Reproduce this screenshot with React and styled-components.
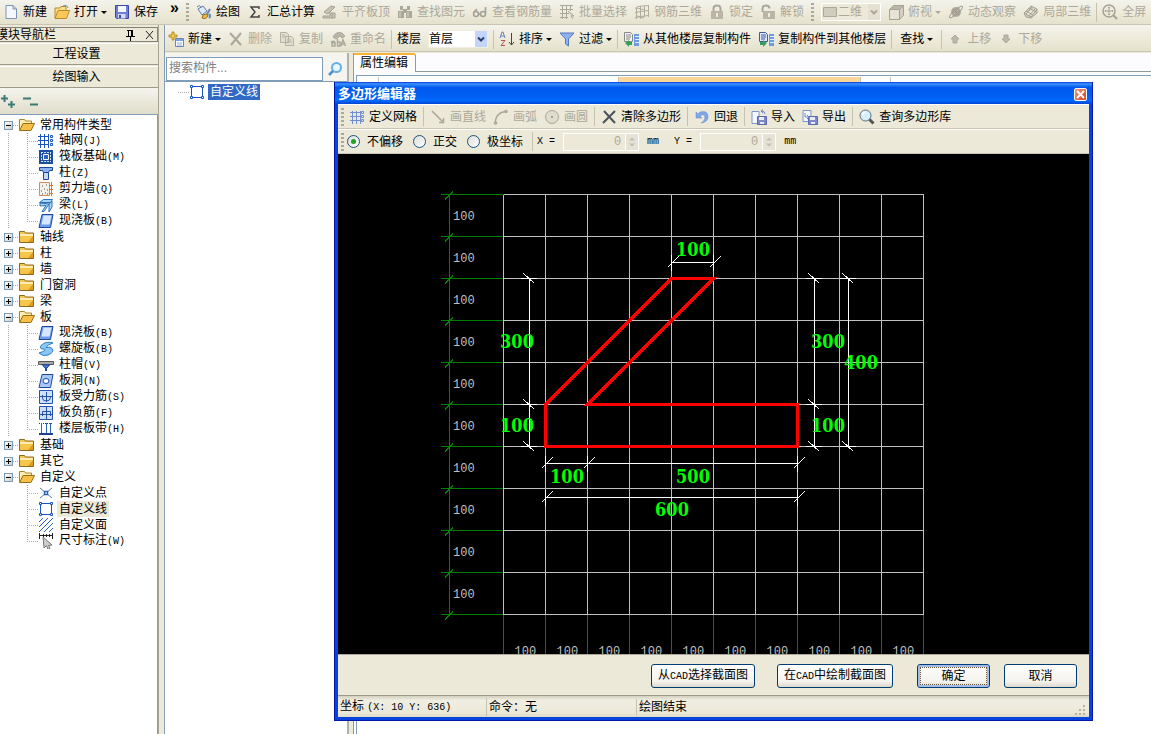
import React from 'react';
import styled, { createGlobalStyle, css } from 'styled-components';

const GlobalStyle = createGlobalStyle`
    * {
        box-sizing: border-box;
    }

    body {
        margin: 0;
        overflow: hidden;
        background: #ece9d8;
        color: #000;
        font: 12px/16px 'Liberation Sans', 'Noto Sans CJK SC', sans-serif;
    }

    button,
    input,
    select {
        font: inherit;
        color: inherit;
    }

    ul {
        list-style: none;
        margin: 0;
        padding: 0;
    }
`;

const icons = {
    page: (
        <path d="M3 1.500h7l3.500 3.500v9.500h-10.500z M10 1.500v3.500h3.500" fill="#f4f8fd" stroke="#7b93b5" />
    ),
    open: (
        <g>
            <path d="M1 14V4h5l1-1.500h5V6" fill="#fbe08c" stroke="#b58a2c" />
            <path d="M1 14.500 4 6.500h11.500l-3 8z" fill="#fcc85a" stroke="#b58a2c" />
            <path d="M9 2q4-2 5 2" fill="none" stroke="#6b93cf" />
        </g>
    ),
    save: (
        <g>
            <path d="M1.500 1.500h13v13h-12l-1-1z" fill="#6f7fd6" stroke="#3b489f" />
            <path d="M4 2h8v6H4z" fill="#f3f6fd" />
            <path d="M4 10h7.500v4.500H4z" fill="#d5daf0" />
            <path d="M5 11h2v3H5z" fill="#3b489f" />
        </g>
    ),
    paint: (
        <g>
            <path d="m2 5 5-3 4 5-5 4z" fill="#dfe9f8" stroke="#5d7ba9" />
            <path d="M1 3q3-3 4 1" fill="none" stroke="#5d7ba9" />
            <path d="m14 5-4 7" stroke="#6a85b5" strokeWidth="2" />
            <path d="M10 10q-4 0-4 4 5 2 6-3z" fill="#efb53f" stroke="#9d7420" />
            <path d="M13 10q2 2 0 4" fill="none" stroke="#4f86d6" strokeWidth="2" />
        </g>
    ),
    sum: <path d="M12 5V3H4l4 5-4 5h8v-2" fill="none" stroke="#444" strokeWidth="1.500" />,
    slab: (
        <g fill="#c6c3b4" stroke="#a5a294">
            <path d="m2 8 7-6 4 1-7 7z" />
            <path d="M1 12h7V9h5v5H1zM10 9v5" />
        </g>
    ),
    find: (
        <g fill="#aaa89b">
            <path d="M3 2h3v4H3zM10 2h3v4h-3zM1 7h6v7H1zM9 7h6v7H9zM6 5h4v4H6z" />
            <path d="M3 8v5M11 8v5" stroke="#dedbcc" />
        </g>
    ),
    glasses: (
        <g fill="none" stroke="#a3a195" strokeWidth="1.500">
            <circle cx="4" cy="10" r="2.500" />
            <circle cx="11" cy="10" r="2.500" />
            <path d="M6.500 10h2M2 8l3-3M13.500 10V3" />
        </g>
    ),
    batch: (
        <g fill="none" stroke="#aaa89b">
            <path d="M1 1.500h13M1 5.500h13M1 9.500h9M1 13.500h8M3.500 1v14M7.500 1v14M11.500 1v6" />
            <path d="m9 7 6 5h-3l2 3" fill="#d5d2c3" />
        </g>
    ),
    rebar: (
        <path
            d="M1 4.500 4 2.500 14 1.500M1 8.500 14 6.500M1 13.500 14 11.500M2.500 3v12M6.500 2v13M10.500 2v11M14.500 1v12M3 12l7 2M3 4l8 2"
            fill="none"
            stroke="#b0ad9f"
        />
    ),
    lock: (
        <g>
            <path d="M4.500 8V4.500q0-3 3.500-3t3.500 3V8" fill="none" stroke="#aaa89b" strokeWidth="2" />
            <path d="M2 7h12v8H2z" fill="#b9b6a8" />
            <path d="M7 9h2v4H7z" fill="#eeebdc" />
        </g>
    ),
    unlock: (
        <g>
            <path d="M2.500 8V4.500q0-3 3.500-3t3.500 3" fill="none" stroke="#aaa89b" strokeWidth="2" />
            <path d="M3 7h12v8H3z" fill="#b9b6a8" />
            <path d="M8 9h2v4H8z" fill="#eeebdc" />
        </g>
    ),
    plane: <path d="M1.500 3.500h13v9h-13z" fill="#d0cdbe" stroke="#aaa89b" />,
    cube: (
        <g stroke="#a5a294">
            <path d="M1.500 5.500l4-4h10l-4 4z" fill="#bbb8aa" />
            <path d="M1.500 5.500h10v10h-10z" fill="#e6e3d5" />
            <path d="M11.500 5.500l4-4v10l-4 4z" fill="#d2cfc1" />
        </g>
    ),
    orbit: (
        <g>
            <circle cx="8" cy="8" r="5" fill="#aeab9e" />
            <path d="M2 14q-2-2 4-7t8-5q2 2-4 7t-8 5M5 5l6 6" fill="none" stroke="#98968b" />
        </g>
    ),
    local3d: (
        <path d="m1 9 7-7 6 3-6 8zM3 10l6-7M6 12l6-7M3 7l7 4M6 4l7 4M1 9l2 4 5 1 6-5V5" fill="#d5d2c4" stroke="#a3a094" />
    ),
    zoomAll: (
        <g fill="none" stroke="#a5a294">
            <circle cx="7" cy="7" r="6" strokeWidth="1.500" />
            <path d="M7 3v8M3 7h8M6 4l1-1 1 1M6 10l1 1 1-1M4 6 3 7l1 1M10 6l1 1-1 1" />
            <path d="m11 11 4 4" strokeWidth="2" />
        </g>
    ),
    newItem: (
        <g>
            <path d="M4 1h2v3h3v2H6v3H4V6H1V4h3z" fill="#f5d04c" stroke="#b08e2a" />
            <path d="M7.500 7.500h8v8h-8z" fill="#f6faff" stroke="#6a86b8" />
            <path d="M8 8h7v2H8z" fill="#7da4e2" />
            <path d="M9 12h5M9 14h5" stroke="#9bb5de" />
        </g>
    ),
    crossOff: <path d="m2 2 11 12M13 2 3 14" stroke="#aaa79a" strokeWidth="2" />,
    cross: <path d="m3 2 11 12M14 2 2 14" stroke="#4c525d" strokeWidth="2" />,
    copy: (
        <path
            d="M1.500 1.500h6l2 2v8h-8zM6.500 5.500h6l2 2v7h-8zM8 9h4M8 11h5M3 4h3M3 6h3"
            fill="#e2dfd0"
            stroke="#b4b1a3"
        />
    ),
    rename: (
        <g fill="none" stroke="#aaa89b">
            <path d="M3 6q3-6 9-4l3 3-3 2-2-2-4 3z" fill="#b9b6a8" />
            <path d="M1 11q4-2 4 1v3H2v-3h3M7.500 8v7h2.500v-4H7.500M11 15l2-6 2.500 6M12 13h3" strokeWidth="1.500" />
        </g>
    ),
    sort: (
        <g fill="none">
            <path d="m1 7 2-6h1l2 6M2 5h3" stroke="#6a80bd" />
            <path d="M2 9.500h4l-4 5h4" stroke="#b0585c" />
            <path d="M12.500 2v12M10 11l2.500 3 2.500-3" stroke="#444" />
        </g>
    ),
    filter: <path d="M1 2h14L9.500 8v7l-3-2V8z" fill="#8fb2f0" stroke="#5078c0" />,
    copyFrom: (
        <g>
            <path d="M1.500 1.500h6l2 2v7h-8z" fill="#f1f1f1" stroke="#888" />
            <path d="M3 4h5M3 6h5M3 8h4" stroke="#888" />
            <path d="M11 3h5v12h-5z" fill="#6b9be0" />
            <path d="M12 5.500h4M12 8.500h4M12 11.500h4" stroke="#e3eefc" />
            <path d="m2 12 4-3v2h3v3H6v2z" fill="#36a058" />
        </g>
    ),
    copyTo: (
        <g>
            <path d="M1.500 1.500h6l2 2v7h-8z" fill="#dfe8fa" stroke="#3a59a8" />
            <path d="M3 4h5M3 6h5M3 8h4" stroke="#3a59a8" />
            <path d="M11 3h5v12h-5z" fill="#6b9be0" />
            <path d="M12 5.500h4M12 8.500h4M12 11.500h4" stroke="#e3eefc" />
            <path d="m9 12-4-3v2H2v3h3v2z" fill="#36a058" />
        </g>
    ),
    up: <path d="m8 4 4 4h-2v4H6V8H4z" fill="#bcb9ac" stroke="#aaa89b" />,
    down: <path d="M8 12 4 8h2V4h4v4h2z" fill="#bcb9ac" stroke="#aaa89b" />,
    grid: (
        <g fill="none" stroke="#6f8fce">
            <path d="M1 3.500h10M1 7.500h10M1 11.500h10M3.500 2v13M7.500 2v13M11.500 2v13" />
            <path d="M12.500 2.500h2v2h-2zM12.500 6.500h2v2h-2zM12.500 10.500h2v2h-2z" />
        </g>
    ),
    line: <path d="m2 2 11 11M13.500 9v4.500H9" fill="none" stroke="#aaa799" strokeWidth="1.500" />,
    arc: (
        <g fill="none" stroke="#aaa799" strokeWidth="1.500">
            <path d="M2 14Q3 4 12 2.500" />
            <circle cx="13" cy="2.500" r="1" />
            <circle cx="2.500" cy="14" r="1" />
        </g>
    ),
    circle: (
        <g>
            <circle cx="8" cy="8" r="6.500" fill="#e0ddce" stroke="#aaa799" />
            <path d="M7 7h2v2H7z" fill="#a19e91" />
        </g>
    ),
    undo: <path d="M2 3v6h6L6 7q4-3 5 1 0 4-4 6 7-1 7-6 0-7-8-5L4 5z" fill="#7fa6ea" stroke="#5f86c9" strokeWidth=".5" />,
    importFile: (
        <g>
            <path d="M1 2.500h7v12H1z" fill="#f4f8ff" stroke="#7f95c8" />
            <path d="M6.500 7.500h9v8h-9z" fill="#7d88cf" stroke="#5a66b0" />
            <path d="M8 8h5v3H8zM9 13h4v2H9z" fill="#e8edfb" />
            <path d="M14 5q0-3-4-3M12 .5 10 2l2 2" fill="none" stroke="#6b86c0" />
        </g>
    ),
    exportFile: (
        <g>
            <path d="M1 1.500h8v11H1z" fill="#f4f8ff" stroke="#7f95c8" />
            <path d="M6.500 7.500h9v8h-9z" fill="#7d88cf" stroke="#5a66b0" />
            <path d="M8 8h5v3H8zM9 13h4v2H9z" fill="#e8edfb" />
            <path d="M3 4v4h4M5 6l2 2-2 2" fill="none" stroke="#6b86c0" />
        </g>
    ),
    magnifier: (
        <g>
            <path d="m10 10 4.500 4.500" stroke="#555" strokeWidth="3" />
            <circle cx="6.500" cy="6.500" r="5.500" fill="#d7effa" stroke="#5b6c7a" />
            <path d="M3.500 6q.5-2.500 3-3" fill="none" stroke="#fff" strokeWidth="1.500" />
        </g>
    ),
    search: (
        <g fill="none">
            <circle cx="9.500" cy="6.500" r="4.500" fill="#e9f6fd" stroke="#65b3e6" strokeWidth="2" />
            <path d="m6 10-4 4" stroke="#4e8fd0" strokeWidth="2.500" />
        </g>
    ),
    folder: (
        <g>
            <path d="M.5 13.500v-11h5l1 1.500h8v9.500z" fill="#f4c64c" stroke="#8a6a1c" />
            <path d="M1 5h13v2H1z" fill="#fdeeb0" />
            <path d="M9 13 14 7v6z" fill="#dd9c1f" />
        </g>
    ),
    folderOpen: (
        <g>
            <path d="M.5 13V2.500h5l1 1.500h6V7" fill="#fdeeb0" stroke="#a8842c" />
            <path d="M.5 13.500 4 6.500h11.500l-3.500 7z" fill="#f7bf45" stroke="#94701c" />
        </g>
    ),
    axis: (
        <g fill="none" stroke="#1b56bd">
            <path d="M0 3.500h11M0 7.500h11M0 11.500h11M2.500 1v14M6.500 1v14M10.500 1v14" />
            <path d="M12.500 2.500h2v2h-2zM12.500 6.500h2v2h-2zM12.500 10.500h2v2h-2z" />
        </g>
    ),
    raft: (
        <g fill="none">
            <path d="M1 1h14v14H1z" fill="#1c4f9f" />
            <path d="M3 3.500h10M3 12.500h10M3.500 3v10M12.500 3v10" stroke="#cfe2fa" strokeDasharray="2 1" />
            <path d="M5.500 5.500h5v5h-5z" fill="#2c66ba" stroke="#fff" />
        </g>
    ),
    column: (
        <g stroke="#1d4693" fill="#8ab3f0">
            <path d="M1.500 2.500h13v3h-3l-1 2h-5l-1-2h-3z" />
            <path d="M5.500 7.500h5v7h-5z" fill="#c5dafa" />
        </g>
    ),
    shear: (
        <g>
            <path d="M1.500 1.500h10v13h-10z" fill="#f4f1ea" stroke="#d08b58" />
            <path d="M4 5h1M8 4h1M6 8h1M3 10h1M9 9h1M7 12h1M4 13h1M9 13h1" stroke="#555" />
            <path d="M13.500 1v14M11 4.500h4M11 8.500h4M11 12.500h4" stroke="#d9772c" />
        </g>
    ),
    beam: (
        <g stroke="#2c72b8" fill="#a8d4f6">
            <path d="m1.500 5.500 4-3h9l-2 3z" />
            <path d="m2 6 9 1-5 7.500H4l4-6-6 .5zM11 7l3-3v6l-3 5z" />
        </g>
    ),
    slabBlue: (
        <g>
            <path d="M4 1.500h11L12.500 14.500H1z" fill="#6d9cec" stroke="#1b47a0" />
            <path d="M5.500 2.500h8l-2 9h-8z" fill="#d6e6fd" />
        </g>
    ),
    spiral: (
        <path
            d="M15 2Q8-.5 3 4.500q-2 4 3 3.500 4 1-5 4 4 4 9 2 7-3 4-6.500-2-2-6-1 1-3 7-4.500z"
            fill="#8cc6f3"
            stroke="#2a7fc4"
        />
    ),
    cap: (
        <g>
            <path d="M.5 4.500h15v3H.5z" fill="#aaa" stroke="#555" />
            <path d="M4.500 8h7L9 11H7z" fill="#4a86e0" stroke="#1b47a0" />
            <path d="M7 11h2v3H7z" fill="#1b47a0" />
        </g>
    ),
    hole: (
        <g>
            <path d="M4 1.500h11L12.500 14.500H1z" fill="#a9c8f8" stroke="#1b47a0" />
            <ellipse cx="8" cy="8" rx="3" ry="2.500" fill="#fff" stroke="#1b47a0" />
        </g>
    ),
    stress: (
        <g fill="none" stroke="#2353ad">
            <path d="M1.500 1.500h13v13h-13z" fill="#cfe0fa" />
            <path d="M1 7.500h13M8.500 3v10M4.500 6v3q0 3 4 3 4 0 4-4" />
        </g>
    ),
    negative: (
        <g fill="none" stroke="#2353ad">
            <path d="M1.500 1.500h13v13h-13z" fill="#cfe0fa" />
            <path d="M8.500 1v14M4.500 11V6.500h8V11M2 9.500h12" />
        </g>
    ),
    strip: (
        <g stroke="#1d3f94">
            <path d="M1 2.500h14" strokeDasharray="1 1" />
            <path d="M3.500 2v10M8.500 2v10M12.500 2v10" stroke="#2c66ba" />
            <path d="M1 13h14" strokeWidth="2" />
        </g>
    ),
    point: (
        <g fill="none" stroke="#2b62bb">
            <path d="m2 3 12 10M14 3 2 13" stroke="#5a7ca8" />
            <path d="M6.500 6.500h3v3h-3z" fill="#fff" strokeWidth="1.500" />
        </g>
    ),
    polyline: (
        <g fill="#fff" stroke="#1556c0">
            <path d="M2.500 2.500h11v11h-11z" />
            <path d="M1.500 1.500h2v2h-2zM12.500 1.500h2v2h-2zM1.500 12.500h2v2h-2zM12.500 12.500h2v2h-2z" />
        </g>
    ),
    hatch: <path d="M1 5l4-4M1 10l9-9M1 15 15 1M6 15l9-9M11 15l4-4" stroke="#2b62bb" />,
    measure: (
        <g>
            <path d="M1.500 0v6M14.500 0v6M1 2.500h14M8.500 1v3M5.500 1v3M11.500 1v3" stroke="#222" />
            <path d="m5 4 9 8-3.500.5 1.500 3-2 1-1.500-4L6 15z" fill="#ccc" stroke="#777" />
        </g>
    ),
    addAll: <path d="M4.500 2v7M1 5.500h7M11.500 8v7M8 11.500h7" stroke="#3c7a74" strokeWidth="2" />,
    removeAll: <path d="M1 5.500h8M8 11.500h8" stroke="#3c7a74" strokeWidth="2" />,
    pin: <path d="M5 3.500h6M6.500 3v6M9.500 3v6M10.500 3v6M4 9.500h9M8.500 10v4" fill="none" stroke="#000" />,
    close: <path d="m5 4 7 8M12 4l-7 8" stroke="#222" />,
};

const IconSvg = styled.svg`
    flex: none;
    width: 16px;
    height: 16px;
`;

const Icon = ({ name }) => (
    <IconSvg viewBox="0 0 16 16" aria-hidden="true">
        {icons[name]}
    </IconSvg>
);

const Page = styled.div`
    display: flex;
    flex-direction: column;
    height: 100vh;
    overflow: hidden;
    white-space: nowrap;
`;

const Separator = styled.span`
    flex: none;
    width: 1px;
    height: 19px;
    margin: 0 -2px;
    background: #c5c2b0;
`;

const Grip = styled.span`
    flex: none;
    width: 3px;
    height: 18px;
    background: repeating-linear-gradient(#aaa899 0 2px, transparent 2px 4px);
`;

const Toolbar = styled.div`
    display: flex;
    flex: none;
    align-items: center;
    gap: 7px;
    height: 25px;
    padding: 0 3px;
    background: linear-gradient(#f4f3ec, #ece9d8 60%, #e4e1cd);
    border-bottom: 1px solid #c9c5b2;
`;

const ComponentBar = styled(Toolbar)`
    height: 27px;
    padding-top: 2px;
`;

const DialogBar = styled(Toolbar)`
    background: #ece9d8;
    border-top: 1px solid #fff;

    > ${Grip} {
        margin-right: -2px;
    }

    > ${Separator} {
        margin: 0 -1px;
    }
`;

const OptionBar = styled(DialogBar)`
    gap: 5px;
`;

const Tool = styled.button`
    display: flex;
    flex: none;
    align-items: center;
    gap: 4px;
    padding: ${props => (props.$plain ? '0 3px' : '0')};
    border: 0;
    background: transparent;

    &:disabled {
        color: #aca899;
    }
`;

const Caret = styled.span`
    margin-left: -1px;
    border: 3px solid transparent;
    border-top-color: ${props => (props.$off ? '#aca899' : '#000')};
    border-bottom: 0;
`;

const More = styled.button`
    align-self: flex-start;
    margin-left: 5px;
    padding: 0;
    border: 0;
    background: transparent;
    font-size: 16px;
    font-weight: bold;
    line-height: 16px;
`;

const SelectBox = styled.label`
    display: flex;
    flex: none;
    align-items: center;
    width: 60px;
    height: 18px;
    background: ${props => (props.$off ? '#ece9d8' : '#fff')};
    border: 1px solid ${props => (props.$off ? '#fff' : '#f0eee2')};

    select {
        flex: 1;
        min-width: 0;
        height: 16px;
        padding: 0;
        border: 0;
        appearance: none;
        background: transparent;

        &:disabled {
            color: #aca899;
            opacity: 1;
        }
    }
`;

const DropArrow = styled.svg`
    flex: none;
    width: 12px;
    height: 16px;
    background: ${props => (props.$off ? '#e4e1d2' : '#c5d5fa')};
`;

const Body = styled.div`
    display: flex;
    flex: 1;
    min-height: 0;
`;

const Sidebar = styled.aside`
    display: flex;
    flex: none;
    flex-direction: column;
    width: 159px;
    padding-top: 2px;
    border-right: 1px solid #a9a695;
`;

const SideHeader = styled.header`
    display: flex;
    align-items: center;
    gap: 3px;
    height: 15px;
    border: 1px solid #848274;
    border-left: 0;

    h2 {
        flex: 1;
        margin: 0;
        font-size: 12px;
        font-weight: normal;
        text-indent: -4px;
    }
`;

const SideButton = styled.button`
    height: 22px;
    margin-top: 1px;
    padding: 0 5px 0 0;
    border: 0;
    border-top: 1px solid #fff;
    border-bottom: 1px solid #9d9a8b;
    background: #ece9d8;
`;

const SideTools = styled.div`
    display: flex;
    align-items: center;
    gap: 6px;
    height: 26px;
    background: linear-gradient(#f5f4ed, #e0ddca);
`;

const Tree = styled.ul`
    flex: 1;
    padding: 2px 0 0 4px;
    background: #fff;
    border-top: 1px solid #7f9db9;
    border-right: 1px solid #7f9db9;
`;

const dotsDown = 'repeating-linear-gradient(#aaa 0 1px, transparent 1px 2px)';
const dotsAcross = 'repeating-linear-gradient(90deg, #aaa 0 1px, transparent 1px 2px)';

const TreeRow = styled.div`
    display: flex;
    align-items: center;
    height: 16px;
`;

const Expander = styled.button`
    flex: none;
    width: 9px;
    height: 9px;
    padding: 0;
    border: 1px solid #7b9ab8;
    background: linear-gradient(#000, #000) center / 5px 1px no-repeat,
        ${props => !props.$open && 'linear-gradient(#000, #000) center / 1px 5px no-repeat,'}
        linear-gradient(135deg, #fff, #cfcabc);
`;

const Dash = styled.span`
    flex: none;
    width: ${props => (props.$wide ? '11px' : '6px')};
    height: 1px;
    background: ${dotsAcross};
`;

const RootGuide = styled.span`
    flex: none;
    width: 19px;
    height: 16px;
    margin-left: 4px;
    background: ${props => (props.$blank ? 'none' : `${dotsDown} 0 0 / 1px 100% no-repeat`)};
`;

const LeafGuide = styled.span`
    flex: none;
    width: 11px;
    height: 16px;
    background: ${dotsDown} 0 0 / 1px ${props => (props.$last ? '50%' : '100%')} no-repeat,
        ${dotsAcross} 0 8px / 100% 1px no-repeat;
`;

const Label = styled.span`
    margin-left: 3px;
    padding: 0 2px;
    ${props =>
        props.$current &&
        css`
            background: #ece9d8;
        `}
    ${props =>
        props.$selected &&
        css`
            background: #316ac5;
            color: #fff;
        `}
`;

const Half = styled.span`
    font-family: 'Liberation Mono', monospace;
    font-size: 10px;
`;

const Workspace = styled.main`
    display: flex;
    flex: 1;
    flex-direction: column;
    min-width: 0;
    margin-left: 5px;
    border-left: 1px solid #8a9db5;
`;

const Panes = styled.div`
    display: flex;
    flex: 1;
    gap: 4px;
    min-height: 0;
    padding-top: 1px;
`;

const SearchPane = styled.section`
    display: flex;
    flex: none;
    flex-direction: column;
    width: 184px;
    background: #fff;
    border-right: 2px solid #aeb2ae;
`;

const SearchRow = styled.div`
    display: flex;
    height: 29px;
    padding: 4px 0 0 1px;
    background: #f5f4ee;
    border-bottom: 1px solid #7f9db9;

    input {
        width: 157px;
        padding: 0 2px 3px;
        border: 1px solid #7f9db9;
        background: #fff;

        &::placeholder {
            color: #808080;
            opacity: 1;
        }
    }

    button {
        flex: 1;
        padding: 4px 0 0;
        border: 0;
        background: transparent;
    }
`;

const ComponentList = styled.ul`
    padding: 2px 0 0 13px;
`;

const PropertyPane = styled.section`
    display: flex;
    flex: 1;
    flex-direction: column;
    min-width: 0;
    background: #fcfcfe;
    border-left: 1px solid #919b9c;
`;

const TabStrip = styled.div`
    display: flex;
    height: 19px;
    border-bottom: 1px solid #919b9c;
`;

const Tab = styled.button`
    height: 19px;
    padding: 0 7px 1px 6px;
    border: 0;
    border-top: 2px solid #f9b138;
    border-right: 1px solid #919b9c;
    border-radius: 0 3px 0 0;
    background: #fcfcfe;
`;

const PropertyGrid = styled.div`
    display: grid;
    flex: 1;
    grid-template-columns: 22px 240px 242px 30px 1fr;
    grid-template-rows: 20px;
    margin: 3px 0 0 2px;
    background: #fff;
    border: solid #7f9db9;
    border-width: 1px 0 0 1px;

    span {
        margin-top: 1px;
        border-right: 1px solid #c5c2b8;
    }

    span:nth-child(3) {
        background: #fad595;
    }
`;

const Dialog = styled.section`
    position: absolute;
    top: 82px;
    right: 58px;
    left: 334px;
    padding: 0 3px 3px;
    background: #0843dc;
    border: solid #0018a8;
    border-width: 0 1px 1px;
    white-space: nowrap;
`;

const TitleBar = styled.header`
    display: flex;
    align-items: center;
    justify-content: space-between;
    height: 22px;
    margin: 0 -3px;
    padding: 2px 5px 0 3px;
    background: linear-gradient(#0831d9, #3c93ff 8%, #0058ee 25%, #0062f5 70%, #0069fd 85%, #0044d0);

    h1 {
        margin: 0;
        color: #fff;
        font-size: 13px;
        font-weight: bold;
    }

    button {
        display: grid;
        place-items: center;
        width: 13px;
        height: 13px;
        padding: 0;
        border: 1px solid #fff;
        border-radius: 2px;
        background: linear-gradient(135deg, #ee9a7d, #d8411c);
    }
`;

const Option = styled.label`
    display: flex;
    align-items: center;
    gap: 7px;
    margin-right: 5px;

    input {
        display: grid;
        place-items: center;
        width: 13px;
        height: 13px;
        margin: 0;
        appearance: none;
        border: 1px solid #1d5281;
        border-radius: 50%;
        background: linear-gradient(135deg, #dcdcd7, #fff);
    }

    input:checked::before {
        content: '';
        width: 5px;
        height: 5px;
        border-radius: 50%;
        background: #21a121;
    }
`;

const Field = styled.label`
    display: flex;
    flex: none;
    align-items: center;
    gap: 8px;
    margin-right: 10px;
    font-family: 'Liberation Mono', monospace;
    font-size: 10px;
`;

const SpinBox = styled.span`
    display: flex;
    width: 76px;
    height: 18px;
    border: 1px solid #fff;

    input {
        flex: 1;
        min-width: 0;
        padding: 0 4px;
        border: 0;
        background: #ece9d8;
        color: #aca899;
        font-size: 12px;
        text-align: right;
    }

    svg {
        width: 13px;
        border-left: 1px solid #fff;
        background: #e6e3d6;
    }
`;

const Canvas = styled.svg`
    display: block;
    width: 100%;
    height: 500px;
    background: #000;
    font-family: 'Liberation Mono', monospace;
    font-size: 12px;
    shape-rendering: crispEdges;
`;

const DimensionText = styled.text`
    fill: #0f0;
    font-family: 'DejaVu Serif Condensed', 'DejaVu Serif', serif;
    font-size: 18px;
    font-weight: bold;
    text-anchor: middle;
`;

const Actions = styled.div`
    display: flex;
    align-items: center;
    justify-content: flex-end;
    height: 41px;
    padding: 2px 12px 0 0;
    background: #ece9d8;
    border-top: 1px solid #aca899;
`;

const ActionButton = styled.button`
    height: 24px;
    min-width: 73px;
    margin-left: ${props => props.$gap};
    padding: 0 6px;
    border: 1px solid #003c74;
    border-radius: 3px;
    background: linear-gradient(#fff, #f3f2ec 75%, #dcd8cc);
    ${props =>
        props.$primary &&
        css`
            box-shadow: inset 0 0 0 2px #a3bdea;
            outline: 1px dotted #6b5333;
            outline-offset: -4px;
        `}
`;

const StatusBar = styled.footer`
    display: grid;
    grid-template-columns: 149px 150px 1fr 14px;
    align-items: center;
    height: 22px;
    background: linear-gradient(#d3d0bf, #f0eee2 20%, #ece9d8 80%, #dedac6);
    border-top: 1px solid #9d9a8b;

    svg {
        align-self: end;
        width: 12px;
        height: 12px;
    }
`;

const StatusCell = styled.span`
    padding-left: 2px;
    border-right: 1px solid ${props => (props.$last ? 'transparent' : '#c5c2b0')};
`;

const mainTools = [
    ['paint', '绘图'],
    ['sum', '汇总计算'],
    ['slab', '平齐板顶', true],
    ['find', '查找图元', true],
    ['glasses', '查看钢筋量', true],
    ['batch', '批量选择', true],
    ['rebar', '钢筋三维', true],
    ['lock', '锁定', true],
    ['unlock', '解锁', true],
];

const tree = [
    {
        name: '常用构件类型',
        items: [
            ['axis', '轴网', 'J'],
            ['raft', '筏板基础', 'M'],
            ['column', '柱', 'Z'],
            ['shear', '剪力墙', 'Q'],
            ['beam', '梁', 'L'],
            ['slabBlue', '现浇板', 'B'],
        ],
    },
    { name: '轴线' },
    { name: '柱' },
    { name: '墙' },
    { name: '门窗洞' },
    { name: '梁' },
    {
        name: '板',
        items: [
            ['slabBlue', '现浇板', 'B'],
            ['spiral', '螺旋板', 'B'],
            ['cap', '柱帽', 'V'],
            ['hole', '板洞', 'N'],
            ['stress', '板受力筋', 'S'],
            ['negative', '板负筋', 'F'],
            ['strip', '楼层板带', 'H'],
        ],
    },
    { name: '基础' },
    { name: '其它' },
    {
        name: '自定义',
        items: [
            ['point', '自定义点'],
            ['polyline', '自定义线'],
            ['hatch', '自定义面'],
            ['measure', '尺寸标注', 'W'],
        ],
    },
];

const ToolButton = ({ icon, label, off, menu }) => (
    <Tool type="button" disabled={off} $plain={!icon}>
        {icon && <Icon name={icon} />}
        {label}
        {menu && <Caret $off={off} />}
    </Tool>
);

const DropDown = ({ label, value, icon, off }) => (
    <SelectBox $off={off}>
        {icon && <Icon name={icon} />}
        <select aria-label={label} disabled={off} defaultValue={value}>
            <option>{value}</option>
        </select>
        <DropArrow $off={off} viewBox="0 0 12 15" aria-hidden="true">
            <path d="m3 6 3 3 3-3" fill="none" stroke={off ? '#aca899' : '#26406f'} strokeWidth="2" />
        </DropArrow>
    </SelectBox>
);

const Navigator = () => (
    <Sidebar>
        <SideHeader>
            <h2>模块导航栏</h2>
            <Tool type="button" aria-label="固定">
                <Icon name="pin" />
            </Tool>
            <Tool type="button" aria-label="关闭">
                <Icon name="close" />
            </Tool>
        </SideHeader>
        <SideButton type="button">工程设置</SideButton>
        <SideButton type="button">绘图输入</SideButton>
        <SideTools>
            <Tool type="button" aria-label="全部展开">
                <Icon name="addAll" />
            </Tool>
            <Tool type="button" aria-label="全部折叠">
                <Icon name="removeAll" />
            </Tool>
        </SideTools>
        <Tree>
            {tree.map(({ name, items }, index) => (
                <li key={name}>
                    <TreeRow>
                        <Expander type="button" aria-label={name} $open={!!items} />
                        <Dash />
                        <Icon name={items ? 'folderOpen' : 'folder'} />
                        <Label>{name}</Label>
                    </TreeRow>
                    {items && (
                        <ul>
                            {items.map(([icon, label, key], i) => (
                                <li key={label}>
                                    <TreeRow>
                                        <RootGuide $blank={index === tree.length - 1} />
                                        <LeafGuide $last={i === items.length - 1} />
                                        <Icon name={icon} />
                                        <Label $current={label === '自定义线'}>
                                            {label}
                                            {key && <Half>({key})</Half>}
                                        </Label>
                                    </TreeRow>
                                </li>
                            ))}
                        </ul>
                    )}
                </li>
            ))}
        </Tree>
    </Sidebar>
);

// grid origin and cell size on the canvas
const STEP = 42;
const gx = n => 165.5 + n * STEP;
const gy = n => 40.5 + n * STEP;
const lines = Array.from({ length: 11 }, (_, i) => i);
const cells = lines.slice(0, 10);

const HorizontalDim = ({ y, stops }) => (
    <g stroke="#fff">
        <path d={`M${gx(stops[0])} ${y}H${gx(stops[stops.length - 1])}`} />
        {stops.map(s => (
            <path key={s} d={`M${gx(s)} ${y - 8}v16M${gx(s) - 4} ${y + 5}l11-11`} />
        ))}
    </g>
);

const VerticalDim = ({ x, stops }) => (
    <g stroke="#fff">
        <path d={`M${x} ${gy(stops[0])}V${gy(stops[stops.length - 1])}`} />
        {stops.map(s => (
            <path key={s} d={`M${x - 9} ${gy(s)}h16M${x - 6} ${gy(s) - 5}l11 10`} />
        ))}
    </g>
);

const Drawing = () => (
    <Canvas role="img" aria-label="多边形">
        <g stroke="#008000">
            <path d={`M111.500 ${gy(0)}V${gy(10)}`} />
            {lines.map(n => (
                <path key={n} d={`M103 ${gy(n)}H${gx(0)}M107 ${gy(n) + 5}l8-8M${gx(n)} ${gy(10)}V500`} />
            ))}
        </g>
        <g stroke="#c0c0c0">
            {lines.map(n => (
                <path key={n} d={`M${gx(0)} ${gy(n)}H${gx(10)}M${gx(n)} ${gy(0)}V${gy(10)}`} />
            ))}
        </g>
        <g fill="#c0c0c0">
            {cells.map(n => (
                <g key={n}>
                    <text x="115" y={gy(n) + 25}>100</text>
                    <text x={gx(n) + 11} y="501">100</text>
                </g>
            ))}
        </g>
        <HorizontalDim y={108.5} stops={[4, 5]} />
        <HorizontalDim y={309.5} stops={[1, 2, 7]} />
        <HorizontalDim y={343.5} stops={[1, 7]} />
        <VerticalDim x={191.5} stops={[2, 5, 6]} />
        <VerticalDim x={476.5} stops={[2, 5, 6]} />
        <VerticalDim x={510.5} stops={[2, 6]} />
        <path
            d={`M${gx(4)} ${gy(2)}H${gx(5)}L${gx(2)} ${gy(5)}H${gx(7)}V${gy(6)}H${gx(1)}V${gy(5)}Z`}
            fill="none"
            stroke="#f00"
            strokeWidth="3"
        />
        <DimensionText x="355" y="102">100</DimensionText>
        <DimensionText x="179" y="194">300</DimensionText>
        <DimensionText x="179" y="278">100</DimensionText>
        <DimensionText x="490" y="194">300</DimensionText>
        <DimensionText x="490" y="278">100</DimensionText>
        <DimensionText x="523" y="215">400</DimensionText>
        <DimensionText x="229" y="329">100</DimensionText>
        <DimensionText x="355" y="329">500</DimensionText>
        <DimensionText x="334" y="362">600</DimensionText>
    </Canvas>
);

const Offset = ({ axis }) => (
    <Field>
        {axis} =
        <SpinBox>
            <input type="text" defaultValue="0" disabled />
            <svg viewBox="0 0 12 15" aria-hidden="true">
                <path d="m3 6 3-3 3 3zM3 9l3 3 3-3z" fill="#c3c0b2" />
            </svg>
        </SpinBox>
        mm
    </Field>
);

const PolygonEditor = () => (
    <Dialog role="dialog" aria-labelledby="editor-title">
        <TitleBar>
            <h1 id="editor-title">多边形编辑器</h1>
            <button type="button" aria-label="关闭">
                <svg width="9" height="9" aria-hidden="true">
                    <path d="m1 1 7 7M8 1 1 8" stroke="#fff" strokeWidth="2" />
                </svg>
            </button>
        </TitleBar>
        <DialogBar>
            <Grip />
            <ToolButton icon="grid" label="定义网格" />
            <Separator />
            <ToolButton icon="line" label="画直线" off />
            <ToolButton icon="arc" label="画弧" off />
            <ToolButton icon="circle" label="画圆" off />
            <Separator />
            <ToolButton icon="cross" label="清除多边形" />
            <Separator />
            <ToolButton icon="undo" label="回退" />
            <Separator />
            <ToolButton icon="importFile" label="导入" />
            <ToolButton icon="exportFile" label="导出" />
            <Separator />
            <ToolButton icon="magnifier" label="查询多边形库" />
        </DialogBar>
        <OptionBar>
            <Grip />
            <Option>
                <input type="radio" name="offset" defaultChecked />
                不偏移
            </Option>
            <Option>
                <input type="radio" name="offset" />
                正交
            </Option>
            <Option>
                <input type="radio" name="offset" />
                极坐标
            </Option>
            <Separator />
            <Offset axis="X" />
            <Offset axis="Y" />
        </OptionBar>
        <Drawing />
        <Actions>
            <ActionButton type="button" $gap="0">
                从<Half>CAD</Half>选择截面图
            </ActionButton>
            <ActionButton type="button" $gap="22px">
                在<Half>CAD</Half>中绘制截面图
            </ActionButton>
            <ActionButton type="button" $gap="24px" $primary>
                确定
            </ActionButton>
            <ActionButton type="button" $gap="14px">
                取消
            </ActionButton>
        </Actions>
        <StatusBar>
            <StatusCell>
                坐标 <Half>(X: 10 Y: 636)</Half>
            </StatusCell>
            <StatusCell>命令：无</StatusCell>
            <StatusCell $last>绘图结束</StatusCell>
            <svg viewBox="0 0 12 12" aria-hidden="true">
                <path d="M8 0h2v2H8zM4 4h2v2H4zM8 4h2v2H8zM0 8h2v2H0zM4 8h2v2H4zM8 8h2v2H8z" fill="#b8b4a2" />
            </svg>
        </StatusBar>
    </Dialog>
);

const App = () => (
    <Page>
        <GlobalStyle />
        <Toolbar>
            <ToolButton icon="page" label="新建" />
            <ToolButton icon="open" label="打开" menu />
            <ToolButton icon="save" label="保存" />
            <More type="button">»</More>
            <Grip />
            {mainTools.map(([icon, label, off]) => (
                <ToolButton key={label} icon={icon} label={label} off={off} />
            ))}
            <Grip />
            <DropDown label="视图" value="二维" icon="plane" off />
            <ToolButton icon="cube" label="俯视" off menu />
            <ToolButton icon="orbit" label="动态观察" off />
            <ToolButton icon="local3d" label="局部三维" off />
            <Separator />
            <ToolButton icon="zoomAll" label="全屏" off />
        </Toolbar>
        <Body>
            <Navigator />
            <Workspace>
                <ComponentBar>
                    <ToolButton icon="newItem" label="新建" menu />
                    <ToolButton icon="crossOff" label="删除" off />
                    <ToolButton icon="copy" label="复制" off />
                    <ToolButton icon="rename" label="重命名" off />
                    <Separator />
                    <span>楼层</span>
                    <DropDown label="楼层" value="首层" />
                    <Separator />
                    <ToolButton icon="sort" label="排序" menu />
                    <ToolButton icon="filter" label="过滤" menu />
                    <Separator />
                    <ToolButton icon="copyFrom" label="从其他楼层复制构件" />
                    <ToolButton icon="copyTo" label="复制构件到其他楼层" />
                    <Separator />
                    <ToolButton label="查找" menu />
                    <Separator />
                    <ToolButton icon="up" label="上移" off />
                    <ToolButton icon="down" label="下移" off />
                </ComponentBar>
                <Panes>
                    <SearchPane>
                        <SearchRow>
                            <input type="text" aria-label="搜索构件" placeholder="搜索构件..." />
                            <button type="button" aria-label="搜索">
                                <Icon name="search" />
                            </button>
                        </SearchRow>
                        <ComponentList>
                            <li>
                                <TreeRow>
                                    <Dash $wide />
                                    <Icon name="polyline" />
                                    <Label $selected>自定义线</Label>
                                </TreeRow>
                            </li>
                        </ComponentList>
                    </SearchPane>
                    <PropertyPane>
                        <TabStrip>
                            <Tab type="button">属性编辑</Tab>
                        </TabStrip>
                        <PropertyGrid>
                            <span />
                            <span />
                            <span />
                            <span />
                        </PropertyGrid>
                    </PropertyPane>
                </Panes>
            </Workspace>
        </Body>
        <PolygonEditor />
    </Page>
);

export default App;
